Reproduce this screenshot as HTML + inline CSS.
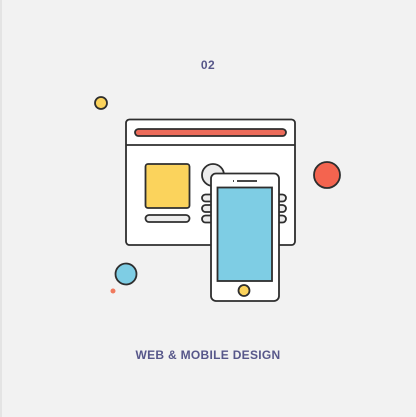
<!DOCTYPE html>
<html><head><meta charset="utf-8"><style>
html,body{margin:0;padding:0}
body{width:416px;height:417px;background:#f2f2f2;position:relative;overflow:hidden;font-family:"Liberation Sans",sans-serif}
.edge{position:absolute;left:0;top:0;width:2px;height:417px;background:#e4e4e4}
.t{position:absolute;left:0;width:416px;text-align:center;color:#57578a;font-weight:bold}
</style></head><body>
<div class="edge"></div>
<div class="t" style="top:58px;font-size:12px;letter-spacing:0.5px">02</div>
<div class="t" style="top:348px;font-size:12px;letter-spacing:0.3px">WEB &amp; MOBILE DESIGN</div>
<svg width="416" height="417" style="position:absolute;left:0;top:0" stroke="#2e2e2e" stroke-width="1.8">
<circle cx="101" cy="103" r="6" fill="#fbd35c"/>
<rect x="126" y="119.5" width="169" height="125.5" rx="3.5" fill="#fff"/>
<line x1="126" y1="145" x2="295" y2="145"/>
<rect x="135" y="129" width="151" height="7" rx="3.5" fill="#ec6b5a"/>
<rect x="145.5" y="164" width="44" height="44" rx="2.5" fill="#fbd35c"/>
<rect x="145.5" y="215" width="44" height="7" rx="3.5" fill="#ececec"/>
<circle cx="213" cy="175" r="11" fill="#ececec"/>
<rect x="202" y="194.5" width="84" height="7" rx="3.5" fill="#ececec"/>
<rect x="202" y="205" width="84" height="7" rx="3.5" fill="#ececec"/>
<rect x="202" y="215.5" width="84" height="7" rx="3.5" fill="#ececec"/>
<rect x="211" y="173.5" width="68" height="127.5" rx="5" fill="#fff"/>
<rect x="217.5" y="187.5" width="54.5" height="93.5" fill="#7ecde4"/>
<line x1="233" y1="181" x2="234" y2="181"/>
<line x1="237" y1="181" x2="257" y2="181"/>
<circle cx="244" cy="290.5" r="5.5" fill="#fbd35c"/>
<circle cx="327" cy="175" r="13" fill="#f4644f"/>
<circle cx="126" cy="274" r="10.5" fill="#7ecde4"/>
<circle cx="113" cy="291" r="2.5" fill="#f07a5e" stroke="none"/>
</svg>
</body></html>
